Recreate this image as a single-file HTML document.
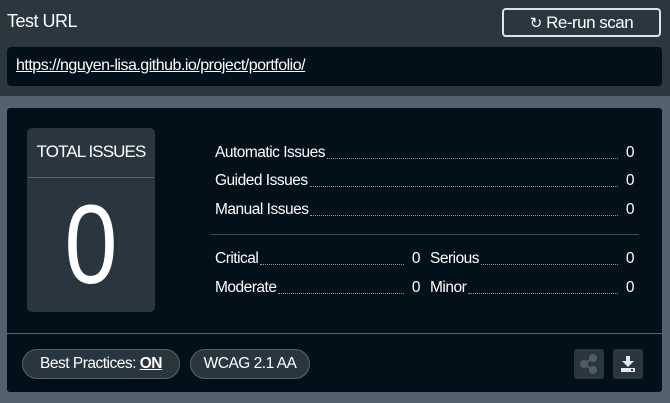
<!DOCTYPE html>
<html><head><style>
*{margin:0;padding:0;box-sizing:border-box}
body{width:670px;height:403px;background:#53636d;font-family:"Liberation Sans",sans-serif;color:#fff;position:relative;overflow:hidden}
.top{position:absolute;left:0;top:0;width:670px;height:96px;background:#2a3640}
.abs{position:absolute}
.row{position:absolute;font-size:15.5px;letter-spacing:-0.5px;display:flex;align-items:flex-end}
.row .d{flex:1;border-bottom:1px dotted #8a969e;margin:0 8px 3px 2px}
.pill{position:absolute;height:30px;border:1px solid #55656f;background:#29363f;border-radius:15px;font-size:15.5px;letter-spacing:-0.5px;line-height:28px;text-align:center}
.ib{position:absolute;top:349px;width:30px;height:30px;background:#29363f;border-radius:3px}
</style></head><body>
<div class="top"></div>
<div class="abs" style="left:7px;top:11px;font-size:18px;letter-spacing:-0.5px">Test URL</div>
<div class="abs" style="left:502px;top:8px;width:159px;height:29px;border:2px solid #dfe3e6;border-radius:4px;font-size:17px;line-height:25px;text-align:center;letter-spacing:-0.5px">
<span style="font-size:15px">&#x21bb;</span> Re-run scan</div>
<div class="abs" style="left:7px;top:47px;width:655px;height:39px;background:#02101a;border-radius:4px"></div>
<div class="abs" style="left:16px;top:57px;font-size:16px;text-decoration:underline;letter-spacing:-0.5px">https://nguyen-lisa.github.io/project/portfolio/</div>
<div class="abs" style="left:7px;top:108px;width:655px;height:284px;background:#02101a;border-radius:3px"></div>
<div class="abs" style="left:27px;top:128px;width:128px;height:184px;background:#29363f;border-radius:5px"></div>
<div class="abs" style="left:28px;top:142px;width:126px;text-align:center;font-size:17px;letter-spacing:-0.9px">TOTAL ISSUES</div>
<div class="abs" style="left:28px;top:177px;width:126px;height:1px;background:#56646d"></div>
<div class="abs" style="left:28px;top:185px;width:126px;text-align:center;font-size:112px;line-height:120px;transform:scaleX(0.85)">0</div>
<div class="row" style="left:215px;top:144px;width:419px"><span>Automatic Issues</span><span class="d"></span><span>0</span></div>
<div class="row" style="left:215px;top:172px;width:419px"><span>Guided Issues</span><span class="d"></span><span>0</span></div>
<div class="row" style="left:215px;top:201px;width:419px"><span>Manual Issues</span><span class="d"></span><span>0</span></div>
<div class="abs" style="left:210px;top:234px;width:429px;height:1px;background:#3d4a53"></div>
<div class="row" style="left:215px;top:250px;width:205px"><span>Critical</span><span class="d"></span><span>0</span></div>
<div class="row" style="left:430px;top:250px;width:204px"><span>Serious</span><span class="d"></span><span>0</span></div>
<div class="row" style="left:215px;top:279px;width:205px"><span>Moderate</span><span class="d"></span><span>0</span></div>
<div class="row" style="left:430px;top:279px;width:204px"><span>Minor</span><span class="d"></span><span>0</span></div>
<div class="abs" style="left:7px;top:333px;width:655px;height:1px;background:#56646d"></div>
<div class="pill" style="left:22px;top:349px;width:158px">Best Practices: <b style="text-decoration:underline">ON</b></div>
<div class="pill" style="left:190px;top:349px;width:120px">WCAG 2.1 AA</div>
<div class="ib" style="left:574px"><svg width="30" height="30"><g fill="#4e5d66" stroke="#4e5d66" stroke-width="2"><circle cx="10" cy="15" r="3"/><circle cx="19" cy="9" r="3"/><circle cx="19" cy="21" r="3"/><path d="M10 15L19 9M10 15L19 21"/></g></svg></div>
<div class="ib" style="left:613px"><svg width="30" height="30"><g fill="#e6e9eb"><rect x="13" y="7" width="4" height="6"/><path d="M9 12h12l-6 6z"/><rect x="8" y="19" width="14" height="4"/></g><rect x="18" y="20" width="2" height="2" fill="#29363f"/></svg></div>
</body></html>
